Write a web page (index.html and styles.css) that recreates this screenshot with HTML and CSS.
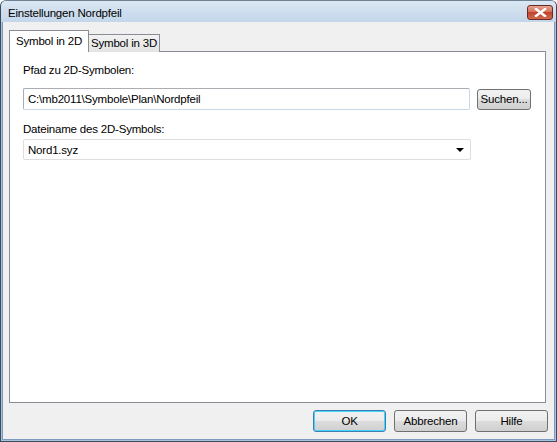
FILE: index.html
```html
<!DOCTYPE html>
<html lang="de">
<head>
  <meta charset="UTF-8">
  <title>Einstellungen Nordpfeil</title>
  <link rel="stylesheet" href="styles.css">
</head>
<body>
  <div class="window">
    <div class="titlebar">
      <span class="title">Einstellungen Nordpfeil</span>
      <button class="close-btn" aria-label="Schließen">
        <svg width="13" height="9" viewBox="0 0 13 9">
          <path d="M2 1 L11 8 M11 1 L2 8" stroke="#fff" stroke-width="2.4" stroke-linecap="square"/>
        </svg>
      </button>
    </div>

    <div class="client">
      <div class="tabs">
        <div class="tab active">Symbol in 2D</div>
        <div class="tab">Symbol in 3D</div>
      </div>

      <div class="panel">
        <label class="field-label">Pfad zu 2D-Symbolen:</label>
        <div class="row">
          <div class="textbox">C:\mb2011\Symbole\Plan\Nordpfeil</div>
          <button class="btn btn-small">Suchen...</button>
        </div>

        <label class="field-label">Dateiname des 2D-Symbols:</label>
        <div class="combo">
          <span>Nord1.syz</span>
          <span class="arrow"></span>
        </div>
      </div>

      <div class="footer">
        <button class="btn btn-default">OK</button>
        <button class="btn">Abbrechen</button>
        <button class="btn">Hilfe</button>
      </div>
    </div>
  </div>
</body>
</html>
```

FILE: styles.css
```css
body {
  margin: 0;
  padding: 0;
  font-family: "Liberation Sans", Arial, sans-serif;
  font-size: 11px;
  letter-spacing: -0.2px;
  color: #000;
}

.window {
  width: 557px;
  height: 442px;
  box-sizing: border-box;
  display: flex;
  flex-direction: column;
  background: #a9c3df;
  border: 1px solid #3c4a5a;
  border-top-color: #6f8192;
  border-radius: 6px 6px 0 0;
  overflow: hidden;
}

.titlebar {
  height: 21px;
  display: flex;
  align-items: center;
  justify-content: space-between;
  padding: 0 3px 0 7px;
  background: linear-gradient(#dbe7f3, #c3d6ea);
}

.title {
  font-size: 11.5px;
  color: #000;
  padding-top: 2px;
}

.close-btn {
  width: 26px;
  height: 15px;
  margin-top: 2px;
  padding: 0;
  border: 1px solid #6b2a24;
  border-radius: 3px;
  background: linear-gradient(#e6a394, #d46a55 50%, #c2432e 50%, #d26a4d);
  display: flex;
  align-items: center;
  justify-content: center;
}

.client {
  flex: 1;
  display: flex;
  flex-direction: column;
  margin: 0 1px 1px 1px;
  border-left: 1px solid #7b9abe;
  border-right: 1px solid #7b9abe;
  border-bottom: 1px solid #7b9abe;
  background: #f0f0f0;
  padding: 8px 8px 0 6px;
}

.tabs {
  display: flex;
  align-items: flex-end;
  height: 21px;
  position: relative;
  z-index: 1;
}

.tab {
  height: 17px;
  padding: 0 2px 0 2px;
  line-height: 17px;
  font-size: 11.5px;
  background: linear-gradient(#f2f2f2, #e3e3e3);
  border: 1px solid #898c95;
  border-bottom: none;
  margin-bottom: -1px;
}

.tab.active {
  height: 20px;
  line-height: 20px;
  padding: 0 6px 1px 6px;
  background: #fff;
}

.tab + .tab {
  border-left: none;
}

.panel {
  height: 342px;
  background: #fff;
  border: 1px solid #898c95;
  padding: 8px 14px 0 13px;
  display: flex;
  flex-direction: column;
}

.field-label {
  font-size: 11.5px;
  height: 18px;
  line-height: 18px;
  margin-top: 1px;
}

.row {
  display: flex;
  align-items: center;
  gap: 7px;
  margin: 9px 0 9px 0;
}

.textbox {
  width: 437px;
  height: 20px;
  line-height: 20px;
  padding: 0 4px;
  font-size: 11.5px;
  border: 1px solid #abadb3;
  border-right-color: #c9d7e6;
  border-bottom-color: #c9d7e6;
  border-radius: 2px;
  background: #fff;
}

.combo {
  width: 436px;
  height: 19px;
  margin-top: 1px;
  padding: 0 6px 0 4px;
  font-size: 11.5px;
  border: 1px solid #dedede;
  border-radius: 2px;
  background: #fff;
  display: flex;
  align-items: center;
  justify-content: space-between;
}

.arrow {
  width: 0;
  height: 0;
  border-left: 4px solid transparent;
  border-right: 4px solid transparent;
  border-top: 4px solid #000;
}

.btn {
  font-family: "Liberation Sans", Arial, sans-serif;
  font-size: 11.5px;
  letter-spacing: -0.2px;
  width: 73px;
  height: 22px;
  padding: 0;
  border: 1px solid #707070;
  border-radius: 3px;
  background: linear-gradient(#f2f2f2, #ebebeb 50%, #dddddd 50%, #cfcfcf);
  color: #000;
}

.btn-small {
  width: 54px;
  height: 21px;
}

.btn-default {
  border-color: #3c7fb1;
  box-shadow: inset 0 0 0 1px #48d4fa;
}

.footer {
  display: flex;
  justify-content: flex-end;
  gap: 8px;
  padding-top: 7px;
  margin-right: -2px;
}
```
